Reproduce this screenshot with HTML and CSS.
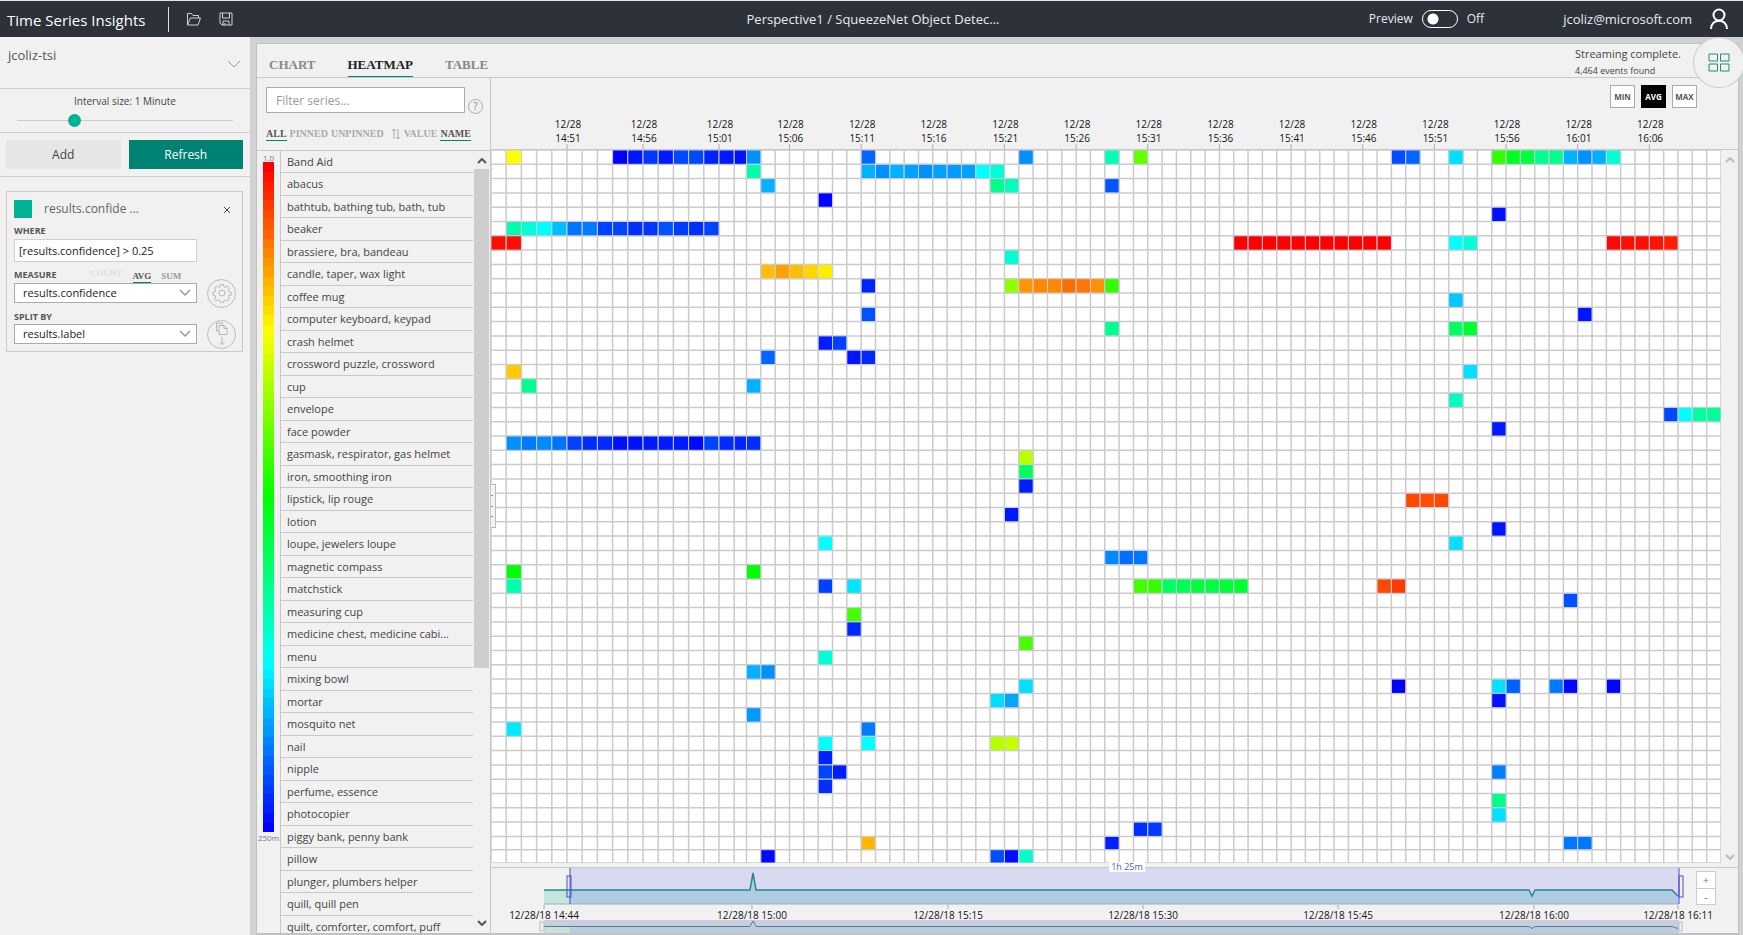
FILE: index.html
```html
<!DOCTYPE html>
<html lang="en">
<head>
<meta charset="utf-8">
<title>Time Series Insights</title>
<link rel="stylesheet" href="styles.css">
</head>
<body>
<header class="topbar">
  <span class="brand">Time Series Insights</span>
  <button class="icon-btn first" aria-label="Open"><svg width="16" height="14" viewBox="0 0 16 14"><path d="M1.5 13V1.5h4l1.5 2h5.500v2.500M1.500 13l3-7h10l-2.500 7z"/></svg></button>
  <button class="icon-btn" aria-label="Save"><svg width="14" height="14" viewBox="0 0 14 14"><path d="M1 1h12v12H3l-2-2zM3.500 1v5h7V1M4 13V9h6v4M6 13v-2"/></svg></button>
  <h1 class="title">Perspective1 / SqueezeNet Object Detec...</h1>
  <label class="preview">Preview <input type="checkbox" class="switch" role="switch"> Off</label>
  <span class="account">jcoliz@microsoft.com</span>
  <svg class="avatar" width="20" height="22" viewBox="0 0 20 22"><circle cx="10" cy="7" r="5.500"/><path d="M2 21c0-11 16-11 16 0"/></svg>
</header>
<div class="page">
  <aside class="side">
    <button class="env"><span>jcoliz-tsi</span><svg width="14" height="8" viewBox="0 0 14 8"><path d="M1 1l6 6 6-6"/></svg></button>
    <div class="interval">
      <label for="interval">Interval size: 1 Minute</label>
      <input id="interval" type="range" min="0" max="100" value="25">
    </div>
    <div class="actions"><button class="add">Add</button><button class="refresh">Refresh</button></div>
    <section class="term">
      <div class="term-head"><span class="swatch"></span><span class="term-name">results.confide ...</span><button class="close" aria-label="Remove"><svg width="8" height="8" viewBox="0 0 8 8"><path d="M1 1l6 6M7 1L1 7"/></svg></button></div>
      <label class="cap" for="where">WHERE</label>
      <input id="where" class="field where" type="text" value="[results.confidence] &gt; 0.25">
      <div class="measure-head"><label class="cap" for="measure">MEASURE</label><button class="agg off">COUNT</button><button class="agg on">AVG</button><button class="agg">SUM</button></div>
      <div class="pick">
        <select id="measure" class="field"><option>results.confidence</option></select>
        <button class="round" aria-label="Settings"><svg width="20" height="20" viewBox="0 0 20 20"><path d="M8.500 1.500h3l.4 2.200 1.600.7 1.900-1.300 2.100 2.100-1.300 1.900.7 1.600 2.200.4v3l-2.200.4-.7 1.600 1.300 1.900-2.100 2.100-1.900-1.300-1.600.7-.4 2.200h-3l-.4-2.200-1.600-.7-1.900 1.300-2.100-2.100 1.300-1.900-.7-1.600-2.200-.4v-3l2.200-.4.7-1.600-1.300-1.900 2.100-2.100 1.900 1.300 1.600-.7z"/><circle cx="10" cy="10" r="3"/></svg></button>
      </div>
      <label class="cap split" for="split">SPLIT BY</label>
      <div class="pick">
        <select id="split" class="field"><option>results.label</option></select>
        <button class="round" aria-label="Copy down"><svg width="16" height="24" viewBox="0 0 16 24"><path d="M5 9H2.500V1h6v2.500M5 3.500h5l3 3v6H5zM10 3.500v3h3M8 15v7.500M5.500 20L8 22.500l2.500-2.500"/></svg></button>
      </div>
    </section>
  </aside>
  <main class="panel">
    <nav class="tabs">
      <button>CHART</button><button class="on">HEATMAP</button><button>TABLE</button>
      <div class="status"><span>Streaming complete.</span><small>4,464 events found</small></div>
    </nav>
    <div class="body">
      <section class="series">
        <div class="filter"><input type="text" placeholder="Filter series..." aria-label="Filter series"><button class="help" aria-label="Help">?</button></div>
        <div class="sort"><button class="on">ALL</button><button>PINNED</button><button>UNPINNED</button><svg width="10" height="12" viewBox="0 0 10 12"><path d="M3 11V1M1 3l2-2 2 2M7 1v10M5 9l2 2 2-2"/></svg><button>VALUE</button><button class="on">NAME</button></div>
        <div class="listing">
          <div class="legend"><span>1.0</span><div id="scale" class="scale"></div><span>250m</span></div>
          <ul id="names" class="names"></ul>
          <div class="scroll"><svg width="10" height="6" viewBox="0 0 10 6"><path d="M1 5l4-4 4 4"/></svg><div class="thumb"></div><svg width="10" height="6" viewBox="0 0 10 6"><path d="M1 1l4 4 4-4"/></svg></div>
        </div>
      </section>
      <section class="viz">
        <button class="grip" aria-label="Resize"><i></i><i></i><i></i></button>
        <div class="stats"><button>MIN</button><button class="on">AVG</button><button>MAX</button></div>
        <svg id="axis" class="axis"></svg>
        <div class="map-row">
          <svg id="heat" class="heat"></svg>
          <div class="scroll faint"><svg width="10" height="6" viewBox="0 0 10 6"><path d="M1 5l4-4 4 4"/></svg><svg width="10" height="6" viewBox="0 0 10 6"><path d="M1 1l4 4 4-4"/></svg></div>
        </div>
        <div class="timeline">
          <svg id="time" class="time"></svg>
          <div class="zoomer"><button>+</button><button>-</button></div>
          <span class="span">1h 25m</span>
        </div>
      </section>
    </div>
  </main>
  <button class="apps" aria-label="Dashboards"><svg width="22" height="20" viewBox="0 0 22 20"><path d="M1 1h8.500v7H1zM12.500 1H21v7h-8.500zM1 11h8.500v7H1zM12.500 11H21v7h-8.500z"/></svg></button>
</div>
<script src="app.js"></script>
</body>
</html>
```
FILE: styles.css
```css
* { box-sizing: border-box; }
body { margin: 0; height: 100vh; display: flex; flex-direction: column; overflow: hidden; background: #d0d1d3; color: #444; font: 11px/16px "Open Sans", "Noto Sans", sans-serif; }
button { margin: 0; padding: 0; border: 0; background: none; color: inherit; font: inherit; }
svg { fill: none; stroke: currentColor; flex: none; }

.topbar { flex: none; height: 37px; border-top: 1px solid #dfe5e8; background: #2c313a; color: #e9eaec; display: flex; align-items: center; font-size: 13px; position: relative; }
.brand { padding: 1px 23px 0 7px; font-size: 15px; line-height: 24px; font-weight: 400; border-right: 1px solid #e0e0e0; color: #fff; }
.icon-btn { width: 16px; height: 16px; margin-left: 16px; display: grid; place-items: center; color: #cfd2d6; }
.icon-btn.first { margin-left: 17px; }
.title { position: absolute; left: 0; right: 0; margin: 0; padding-left: 3px; text-align: center; font-size: 13px; font-weight: 400; pointer-events: none; }
.preview { margin-left: auto; display: flex; align-items: center; gap: 9px; margin-right: 79px; font-size: 12px; }
.switch { appearance: none; width: 36px; height: 18px; margin: 0; border: 1px solid #fff; border-radius: 9px; background: radial-gradient(circle at 10px 8px, #fff 5px, transparent 6px); }
.avatar { margin: 0 14px 0 17px; stroke-width: 2; color: #fff; }

.page { flex: 1; min-height: 0; display: flex; position: relative; }
.side { flex: none; width: 250px; background: #f1f1f1; }
.env { width: 100%; height: 52px; padding: 10px 9px 0 8px; display: flex; justify-content: space-between; align-items: flex-start; border-bottom: 1px solid #cfcfcf; font-size: 13px; color: #555; }
.env svg { margin-top: 13px; color: #999; }
.interval { height: 44px; padding: 3px 17px 0; text-align: center; border-bottom: 1px solid #cfcfcf; font-size: 10px; }
.interval label { display: block; line-height: 18px; }
.interval input { appearance: none; display: block; width: 100%; height: 20px; margin: 0; background: linear-gradient(#ccc, #ccc) 0 50% / 100% 1px no-repeat; }
.interval input::-webkit-slider-thumb { appearance: none; width: 13px; height: 13px; border-radius: 50%; background: #00b294; }
.actions { display: flex; gap: 8px; padding: 7px 7px 7px 6px; height: 44px; border-bottom: 1px solid #cfcfcf; font-size: 12px; color: #444; }
.add { flex: 1; background: #e6e6e6; }
.refresh { flex: 1; background: #008272; color: #fff; }
.term { margin: 14px 7px 14px 6px; padding: 8px 6px 7px 7px; border: 1px solid #cbcbcb; }
.term-head { display: flex; align-items: center; height: 18px; font-size: 12px; color: #666; }
.swatch { width: 18px; height: 18px; margin-right: 12px; background: #00b294; }
.close { margin: 2px 5px 0 auto; line-height: 0; color: #444; }
.cap { display: block; padding-top: 5px; font-size: 9px; font-weight: 700; line-height: 16px; color: #555; }
.cap.split { padding-top: 7px; line-height: 14px; }
.field { width: 183px; height: 20px; margin: 0; padding: 0 8px; border: 1px solid #ababab; border-radius: 0; background: #fff; font: 11px/16px "Open Sans", "Noto Sans", sans-serif; color: #222; }
.where { display: block; height: 23px; padding: 0 4px; border-color: #d0d0d0; }
select.field { appearance: none; background: #fff url("data:image/svg+xml,%3Csvg xmlns='http://www.w3.org/2000/svg' width='12' height='8' fill='none' stroke='%23999' stroke-width='1.500'%3E%3Cpath d='M1 1l5 5 5-5'/%3E%3C/svg%3E") right 5px center no-repeat; }
.measure-head { display: flex; align-items: flex-end; height: 21px; }
.measure-head .cap { width: 76px; }
.agg { margin: 0 10px 1px 0; font: bold 9px/11px "Liberation Serif", serif; color: #999; }
.agg.off { margin-bottom: 4px; color: #ddd; }
.agg.on { color: #555; border-bottom: 1px solid #008272; margin-bottom: 0; }
.pick { display: flex; align-items: center; gap: 10px; height: 20px; }
.round { flex: none; width: 29px; height: 29px; margin-right: -1px; border: 1px solid #bbb; border-radius: 50%; display: grid; place-items: center; color: #b5b5b5; }

.panel { flex: 1; min-width: 0; margin: 6px 4px 0 6px; border: 1px solid #c0c1c3; border-bottom-width: 2px; background: #f1f1f1; display: flex; flex-direction: column; overflow: hidden; }
.tabs { flex: none; height: 34px; padding-left: 12px; display: flex; align-items: flex-end; gap: 32px; border-bottom: 1px solid #c8c8c8; }
.tabs button { height: 28px; padding-top: 4px; font: bold 13px/20px "Liberation Serif", serif; color: #888; }
.tabs button.on { color: #222; border-bottom: 1px solid #008272; }
.status { align-self: flex-start; margin: 1px 57px 0 auto; display: flex; flex-direction: column; line-height: 18px; }
.status small { font-size: 9px; line-height: 16px; }
.body { flex: 1; min-height: 0; display: flex; }
.series { flex: none; width: 233px; display: flex; flex-direction: column; }
.filter { display: flex; gap: 3px; padding: 9px 0 0 9px; align-items: flex-start; }
.filter input { width: 199px; height: 26px; padding: 0 9px; border: 1px solid #ababab; font: inherit; font-size: 12px; background: #fff; }
.filter input::placeholder { color: #999; }
.help { width: 15px; height: 15px; margin-top: 12px; border: 1px solid #aaa; border-radius: 50%; font-size: 10px; line-height: 13px; color: #888; }
.sort { height: 36px; padding: 14px 0 0 9px; display: flex; align-items: flex-start; gap: 3px; color: #aaa; }
.sort button { font: bold 10px/12px "Liberation Serif", serif; }
.sort .on { color: #555; border-bottom: 1px solid #008272; }
.sort svg { margin: 0 0 0 4px; }
.listing { flex: 1; min-height: 0; display: flex; border-top: 1px solid #c8c8c8; }
.legend { width: 23px; padding-top: 3px; display: flex; flex-direction: column; align-items: center; font-size: 8px; line-height: 8px; color: #777; }
.scale { flex: none; width: 11px; height: 86%; margin-bottom: 2px; display: flex; flex-direction: column; }
.scale i { flex: 1; }
.names { flex: 1; min-width: 0; margin: 0; padding: 0; list-style: none; border-left: 1px solid #c8c8c8; overflow: hidden; display: grid; grid-auto-rows: minmax(0, 1fr); height: calc(100% + 5px); }
.names li { padding: 2px 5px 0 6px; border-bottom: 1px solid #c8c8c8; line-height: 18px; white-space: nowrap; overflow: hidden; text-overflow: ellipsis; }
.scroll { flex: none; width: 17px; padding: 7px 0; display: flex; flex-direction: column; align-items: center; gap: 5px; color: #555; stroke-width: 2; }
.thumb { flex: none; width: 15px; height: 65%; background: #cdcdcd; margin-bottom: auto; }
.faint { justify-content: space-between; color: #bbb; }

.viz { flex: 1; min-width: 0; border-left: 1px solid #c8c8c8; display: flex; flex-direction: column; position: relative; }
.grip { position: absolute; left: 0; top: 406px; width: 5px; height: 44px; border: 1px solid #bbb; border-left: 0; background: #f4f4f4; display: flex; flex-direction: column; justify-content: space-evenly; z-index: 1; }
.grip i { width: 2px; height: 1px; background: #888; }
.stats { display: flex; justify-content: flex-end; gap: 6px; padding: 7px 41px 0 0; }
.stats button { width: 25px; height: 23px; border: 1px solid #aaa; background: #fff; font-size: 8px; font-weight: 700; color: #555; }
.stats .on { background: #000; border-color: #000; color: #fff; }
.axis { width: calc(100% - 17px); height: 41px; overflow: visible; color: #aaa; }
.axis text, .time text { fill: #111; stroke: none; font-size: 10px; text-anchor: middle; }
.map-row { flex: 1; min-height: 0; display: flex; border-top: 1px solid #c8c8c8; }
.heat { flex: 1; min-width: 0; height: calc(100% - 4px); background: #fff; }
.heat line { stroke: #cbcbcb; stroke-width: 1.500; }
.heat rect { stroke: #ccd; stroke-width: 1; }
.timeline { flex: none; height: 66px; border-top: 1px solid #c8c8c8; display: flex; position: relative; }
.time { flex: 1; min-width: 0; height: 66px; overflow: visible; }
.zoomer { flex: none; width: 20px; margin: 3px 22px 0 17px; height: 34px; border: 1px solid #ccc; background: #fff; display: flex; flex-direction: column; }
.zoomer button { flex: 1; font-size: 11px; color: #777; }
.zoomer button + button { border-top: 1px solid #ccc; }
.span { position: absolute; left: 51%; top: -6px; transform: translateX(-50%); padding: 0 2px; background: #fff; color: #55c; font-size: 9px; line-height: 10px; }

.apps { position: absolute; right: -2px; top: 0; width: 52px; height: 51px; border: 1px solid #ccc; border-radius: 50%; background: #f1f1f1; display: grid; place-items: center; color: #23897b; }
```
FILE: app.js
```js
const NS = 'http://www.w3.org/2000/svg';
function el(parent, name, attrs, text) {
  const node = document.createElementNS(NS, name);
  for (const key in attrs) node.setAttribute(key, attrs[key]);
  if (text) node.textContent = text;
  parent.appendChild(node);
  return node;
}

const names = ['Band Aid', 'abacus', 'bathtub, bathing tub, bath, tub', 'beaker', 'brassiere, bra, bandeau',
  'candle, taper, wax light', 'coffee mug', 'computer keyboard, keypad', 'crash helmet',
  'crossword puzzle, crossword', 'cup', 'envelope', 'face powder', 'gasmask, respirator, gas helmet',
  'iron, smoothing iron', 'lipstick, lip rouge', 'lotion', 'loupe, jewelers loupe', 'magnetic compass',
  'matchstick', 'measuring cup', 'medicine chest, medicine cabi...', 'menu', 'mixing bowl', 'mortar',
  'mosquito net', 'nail', 'nipple', 'perfume, essence', 'photocopier', 'piggy bank, penny bank', 'pillow',
  'plunger, plumbers helper', 'quill, quill pen', 'quilt, comforter, comfort, puff'];
const list = document.getElementById('names');
names.forEach(name => {
  const item = document.createElement('li');
  item.textContent = name;
  list.appendChild(item);
});

const scale = document.getElementById('scale');
for (let i = 0; i < 70; i++) {
  const step = document.createElement('i');
  step.style.background = `hsl(${Math.round(i * 240 / 69)} 100% 50%)`;
  scale.appendChild(step);
}

// Column and row edges, in units of the plot's full width and height.
const colEdge = c => (c <= 16 ? c * 15.2 : 255.5 + (c - 17) * 14.33) / 1229.94 * 100;
const rowEdge = r => (r <= 48 ? r * 14.31 : 686.9 + (r - 48) * 13.3) / 713.5 * 100;

// Each row: [row, first column, hue, hue, ...]
const runs = [
  [0, 1, 60], [0, 8, 240, 235, 227, 234, 223, 223, 232, 234, 236, 206], [0, 25, 216], [0, 36, 206], [0, 42, 163], [0, 44, 96],
  [0, 62, 222, 216], [0, 66, 187], [0, 69, 108, 127, 134, 154, 154, 198, 206, 199, 170],
  [1, 17, 159], [1, 25, 198, 206, 198, 202, 206, 202, 203, 202, 180, 170],
  [2, 18, 198], [2, 34, 152, 165], [2, 42, 220], [3, 22, 239], [4, 69, 236],
  [5, 1, 160, 170, 180, 195, 213, 211, 225, 224, 229, 227, 221, 226, 229, 224],
  [6, 0, 3, 3], [6, 51, 0, 0, 0, 0, 0, 0, 0, 0, 0, 0, 0], [6, 66, 180, 171], [6, 77, 2, 3, 3, 4, 7],
  [7, 35, 171], [8, 18, 45, 38, 45, 50, 56], [9, 25, 232], [9, 35, 86, 35, 32, 32, 26, 28, 34, 108],
  [10, 66, 193], [11, 25, 221], [11, 75, 235], [12, 42, 154], [12, 66, 143, 131],
  [13, 22, 233, 225], [14, 18, 216], [14, 24, 235, 230], [15, 1, 47], [15, 67, 187],
  [16, 2, 154], [16, 17, 198], [17, 66, 164], [18, 81, 223, 180, 158, 156], [19, 69, 234],
  [20, 1, 206, 211, 207, 213, 225, 230, 230, 236, 236, 234, 234, 234, 238, 224, 230, 231, 229],
  [21, 36, 76], [22, 36, 142], [23, 36, 233], [24, 63, 17, 18, 17], [25, 35, 234], [26, 69, 235],
  [27, 22, 180], [27, 66, 187], [28, 42, 208, 214, 212], [29, 1, 120], [29, 17, 121],
  [30, 1, 160], [30, 22, 225], [30, 24, 186], [30, 44, 104, 108, 143, 140, 133, 135, 133, 132], [30, 61, 17, 14],
  [31, 74, 221], [32, 24, 104], [33, 24, 231], [34, 36, 103], [35, 22, 170], [36, 17, 198, 206],
  [37, 36, 187], [37, 62, 240], [37, 69, 187, 217], [37, 73, 211, 238], [37, 77, 239],
  [38, 34, 188, 201], [38, 69, 236], [39, 17, 204], [40, 1, 185], [40, 25, 211],
  [41, 22, 179], [41, 25, 180], [41, 34, 77, 74], [42, 22, 232], [43, 22, 224, 233], [43, 69, 210],
  [44, 22, 229], [45, 69, 152], [46, 69, 187], [47, 44, 229, 226], [48, 25, 43], [48, 42, 233],
  [48, 74, 212, 212], [49, 18, 238], [49, 34, 222, 237, 168]
];
const heat = document.getElementById('heat');
for (let c = 0; c <= 85; c++) el(heat, 'line', { x1: colEdge(c) + '%', x2: colEdge(c) + '%', y1: 0, y2: '100%' });
for (let r = 0; r <= 50; r++) el(heat, 'line', { y1: rowEdge(r) + '%', y2: rowEdge(r) + '%', x1: 0, x2: '100%' });
runs.forEach(([row, start, ...hues]) => hues.forEach((hue, i) => {
  const c = start + i;
  el(heat, 'rect', {
    x: colEdge(c) + '%', y: rowEdge(row) + '%',
    width: colEdge(c + 1) - colEdge(c) + '%', height: rowEdge(row + 1) - rowEdge(row) + '%',
    fill: `hsl(${hue} 100% 50%)`
  });
}));

const axis = document.getElementById('axis');
for (let i = 1; i <= 16; i++) {
  const minutes = 14 * 60 + 46 + i * 5;
  const x = colEdge(i * 5) + '%';
  el(axis, 'line', { x1: x, x2: x, y1: 36, y2: 42 });
  const label = el(axis, 'text', {});
  el(label, 'tspan', { x, y: 20, dx: 1 }, '12/28');
  el(label, 'tspan', { x, y: 34, dx: 1 }, Math.floor(minutes / 60) + ':' + String(minutes % 60).padStart(2, '0'));
}

const time = document.getElementById('time');
const full = 1188;
const px = v => v / full * 100 + '%';
el(time, 'rect', { x: px(79), y: 0, width: px(1109), height: 36, fill: '#d9d9f1', stroke: 'none' });
const plot = el(time, 'svg', { x: px(53), y: 0, width: px(1135), height: 36, viewBox: '0 0 1135 36', preserveAspectRatio: 'none' });
el(plot, 'path', { d: 'M0 22H26V36H0z', fill: '#c1e6da', stroke: 'none' });
el(plot, 'path', { d: 'M26 22H206L209 4L212 22H985L988 28L991 22H1128L1134 28V36H26z', fill: '#aecde2', stroke: 'none' });
el(plot, 'path', { d: 'M0 22H206L209 5L212 22H985L988 28L991 22H1128L1134 28', stroke: '#23898f', 'stroke-width': 1.5 });
el(time, 'line', { x1: px(53), x2: '100%', y1: 36, y2: 36, stroke: '#aab' });
el(time, 'line', { x1: px(79), x2: px(79), y1: 0, y2: 36, stroke: '#4a4ad0' });
el(time, 'line', { x1: '100%', x2: '100%', y1: 0, y2: 36, stroke: '#4a4ad0' });
el(time, 'rect', { x: px(76), y: 8, width: 4, height: 21, stroke: '#4a4ad0' });
el(time, 'rect', { x: '100%', y: 8, width: 4, height: 21, stroke: '#4a4ad0' });
[[53, '14:44'], [261, '15:00'], [457, '15:15'], [652, '15:30'], [847, '15:45'], [1043, '16:00'], [1187, '16:11']].forEach(([x, t]) => {
  el(time, 'line', { x1: px(x), x2: px(x), y1: 37, y2: 41, stroke: '#aaa' });
  el(time, 'text', { x: px(x), y: 51 }, '12/28/18 ' + t);
});
const mini = el(time, 'svg', { x: px(53), y: 52, width: px(1135), height: 13, viewBox: '0 0 1135 13', preserveAspectRatio: 'none' });
el(mini, 'rect', { x: 0, y: 0, width: 1135, height: 13, fill: '#ccd', stroke: 'none' });
el(mini, 'rect', { x: 0, y: 7, width: 26, height: 6, fill: '#cdded9', stroke: 'none' });
el(mini, 'rect', { x: 26, y: 7, width: 1109, height: 6, fill: '#bccbe0', stroke: 'none' });
el(mini, 'path', { d: 'M0 6.500H206L209 1L212 6.500H985L988 8.500L991 6.500H1128L1134 8.500', stroke: '#3a8a9b' });
el(time, 'rect', { x: px(49), y: 54, width: 4, height: 9, stroke: '#bbb' });
el(time, 'rect', { x: '100%', y: 54, width: 3, height: 9, stroke: '#bbb' });
```
